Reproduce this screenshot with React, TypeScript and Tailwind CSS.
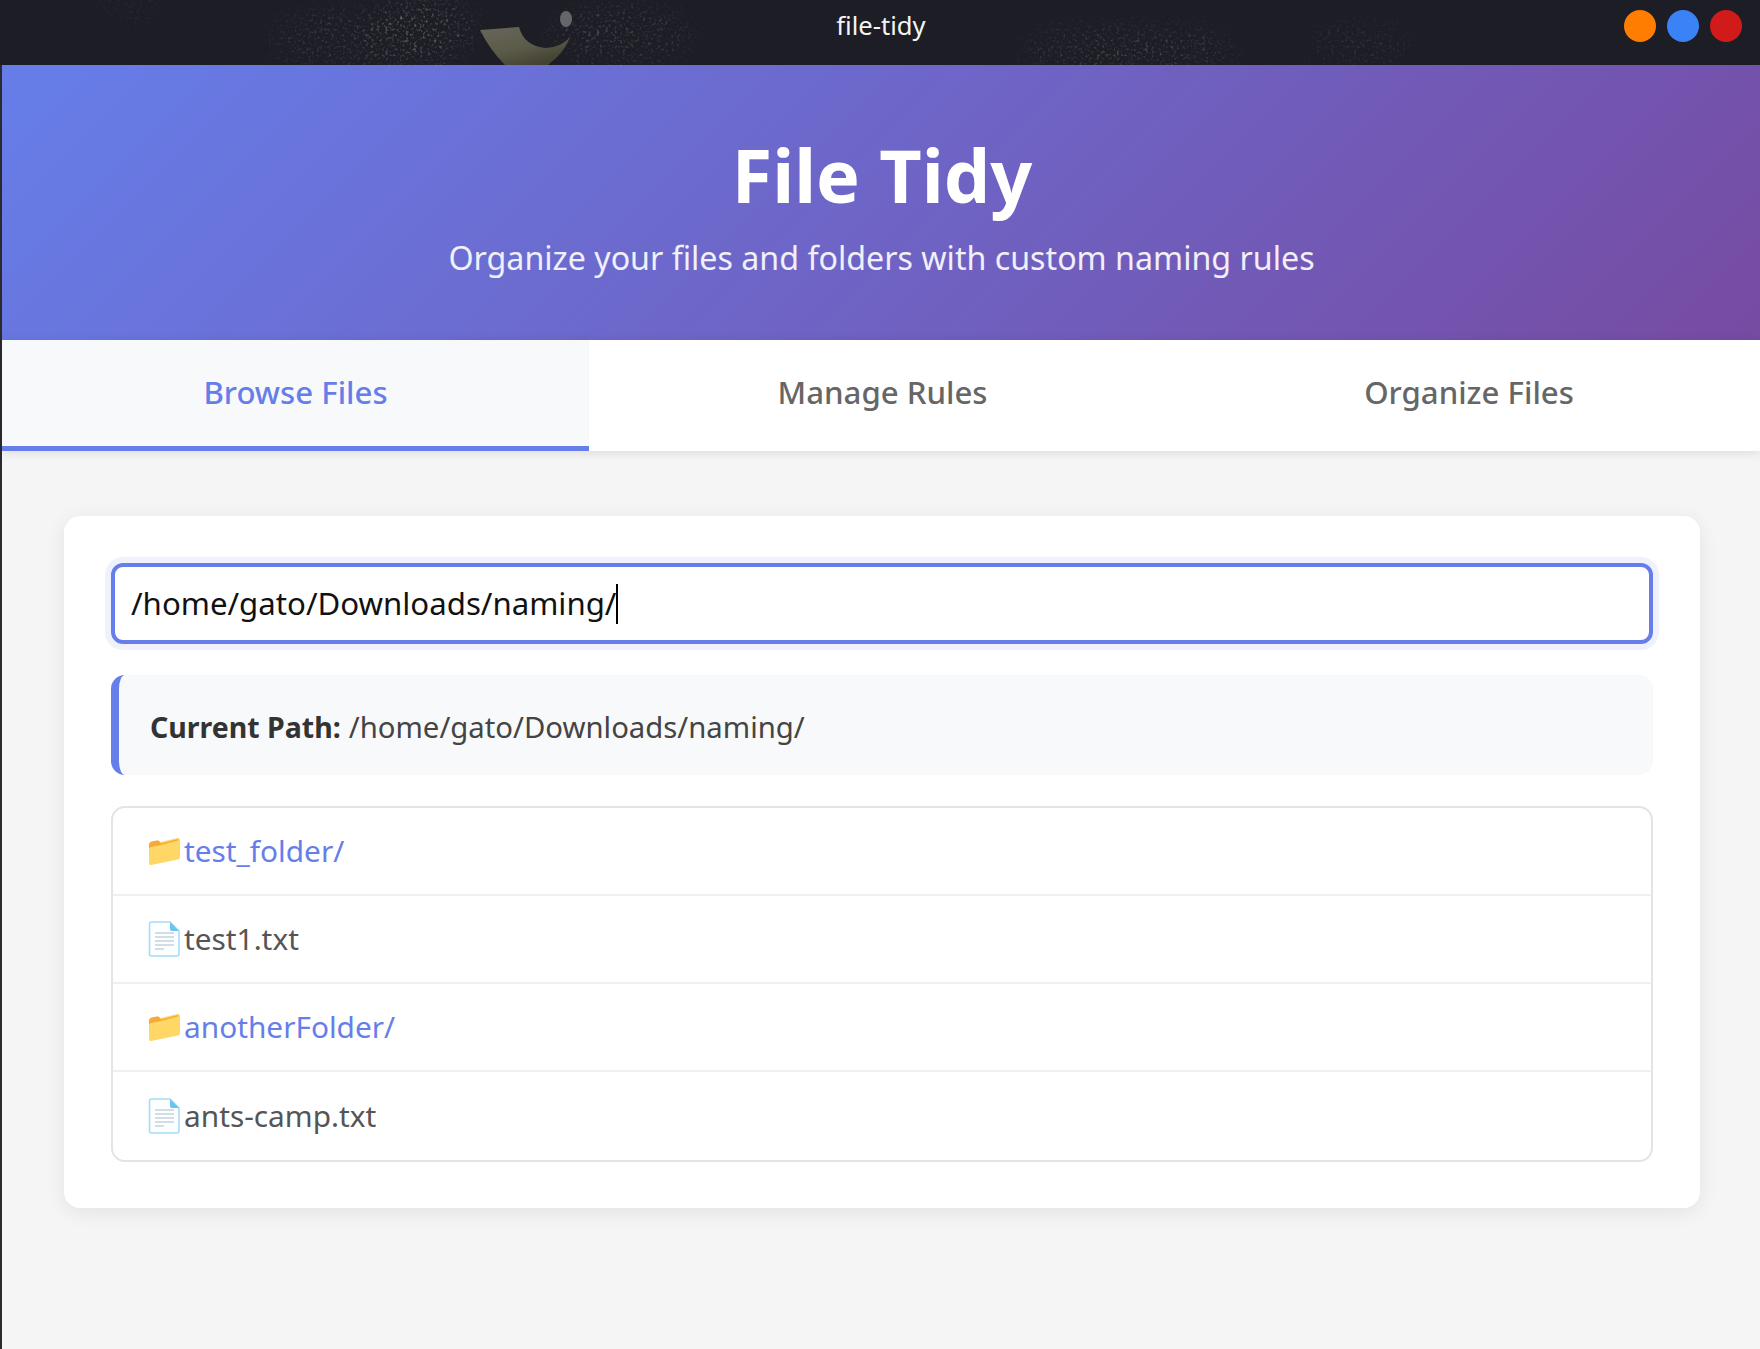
import React from "react";

const FolderIcon = () => (
  <svg width="32" height="30" viewBox="0 0 32 30" className="shrink-0">
    <path d="M1 10 Q1 6 4 5.500 L10 4.500 Q11 4.500 12 6 L30 2 Q32 2 32 4 L32 21 Q32 23 30 23.500 L3 29 Q1 29.500 1 27 Z" fill="#ffd766" />
    <path d="M1 14 L1 9 Q1 6 4 5.500 L9 4.500 Q11 4.200 12 6 L13 7.500 L30 3 L30 4.500 L13 9 Q6 10.500 3 11 Q1 11.500 1 14 Z" fill="#f6a93b" />
  </svg>
);

const FileIcon = () => (
  <svg width="32" height="36" viewBox="0 0 32 36" className="shrink-0">
    <path d="M3.500 1 L22 1 L31 10 L31 33 Q31 35 29 35 L3.500 35 Q1.500 35 1.500 33 L1.500 3 Q1.500 1 3.500 1 Z" fill="#fdfeff" stroke="#a6dcf7" strokeWidth="1.6" />
    <path d="M22 1 L31 10 L24 10 Q22 10 22 8 Z" fill="#6cc3f0" />
    <path d="M7 12 H26 M7 16 H26 M7 20 H26 M7 24 H26 M7 28 H16" stroke="#c5d3dc" strokeWidth="1.4" />
  </svg>
);

const TitleArt = () => (
  <svg className="absolute inset-0 w-full h-full" viewBox="0 0 1760 65" preserveAspectRatio="none">
    <defs>
      <linearGradient id="moon" x1="0" y1="0" x2="0.6" y2="1">
        <stop offset="0" stopColor="#67665c" />
        <stop offset="0.6" stopColor="#5c5a48" />
        <stop offset="1" stopColor="#444233" />
      </linearGradient>
    </defs>
    <filter id="speck" x="0" y="0" width="100%" height="100%">
      <feTurbulence type="fractalNoise" baseFrequency="0.35" numOctaves="2" seed="7" />
      <feColorMatrix values="0 0 0 0 0.4 0 0 0 0 0.4 0 0 0 0 0.4 1.8 1.8 0 0 -1.85" />
    </filter>
    <filter id="blurred"><feGaussianBlur stdDeviation="14" /></filter>
    <mask id="patch">
      <g filter="url(#blurred)" fill="#fff">
        <ellipse cx="340" cy="40" rx="70" ry="28" fillOpacity="0.35" />
        <ellipse cx="420" cy="30" rx="50" ry="34" fillOpacity="0.6" />
        <ellipse cx="620" cy="35" rx="70" ry="28" fillOpacity="0.4" />
        <ellipse cx="1130" cy="50" rx="110" ry="20" fillOpacity="0.45" />
        <ellipse cx="1360" cy="45" rx="50" ry="18" fillOpacity="0.3" />
        <ellipse cx="130" cy="6" rx="30" ry="10" fillOpacity="0.3" />
      </g>
    </mask>
    <rect width="1760" height="65" filter="url(#speck)" mask="url(#patch)" />
    <path d="M480 30 L519 27 Q524 46 546 48 Q562 47 570 37 Q565 52 548 65 L505 65 Q490 50 480 30 Z" fill="url(#moon)" />
    <ellipse cx="566" cy="19" rx="6" ry="8" fill="#66666a" />
  </svg>
);

export default function App() {
  return (
    <div className="min-h-[1349px] bg-[#f5f5f5] text-[#333] font-['Noto_Sans',sans-serif] flex flex-col">
      <div className="relative h-[65px] bg-[#1c1d25] overflow-hidden flex items-center justify-center shrink-0">
        <TitleArt />
        <span className="relative text-[25.6px] text-[#f4f4f5] -mt-[12px] ml-[2px]">file-tidy</span>
        <div className="absolute right-[18px] top-[10px] flex gap-[11px]">
          <span className="w-8 h-8 rounded-full bg-[#ff7d00]" />
          <span className="w-8 h-8 rounded-full bg-[#3b82f6]" />
          <span className="w-8 h-8 rounded-full bg-[#d11a1a]" />
        </div>
      </div>

      <div className="flex-1 flex flex-col border-l-2 border-[#2a2a30]">
        <header className="h-[275px] bg-[linear-gradient(135deg,#667eea_0%,#764ba2_100%)] text-white flex flex-col items-center">
          <h1 className="mt-[56px] ml-[2px] text-[73.6px] leading-[108px] font-bold">File Tidy</h1>
          <p className="mt-[5px] ml-[1px] text-[32.2px] leading-[48px] text-white/90">Organize your files and folders with custom naming rules</p>
        </header>

        <nav className="h-[111px] bg-white grid grid-cols-[587px_587px_584px] shadow-[0_2px_10px_rgba(0,0,0,0.1)] relative">
          <button className="bg-[#f8f9fa] border-b-[5px] border-[#667eea] text-[#667eea] text-[31.2px] font-medium pb-[2px]">Browse Files</button>
          <button className="border-b-[5px] border-transparent text-[#666] text-[31.2px] font-medium pb-[2px]">Manage Rules</button>
          <button className="border-b-[5px] border-transparent text-[#666] text-[31.2px] font-medium pb-[2px] pl-[2px]">Organize Files</button>
        </nav>

        <main className="pt-[65px] pl-[62px] pr-[60px]">
          <section className="h-[692px] bg-white rounded-[16px] shadow-[0_4px_20px_rgba(0,0,0,0.08)] px-[47px] pt-[47px]">
            <div className="h-[81px] bg-white rounded-[12px] border-[4px] border-[#667eea] shadow-[0_0_0_6px_rgba(102,126,234,0.1)] flex items-center pl-[16px] text-[31.2px] text-[#111]">
              <span>/home/gato/Downloads/naming/</span>
              <span className="w-[2px] h-[40px] bg-black" />
            </div>
            <div className="mt-[31px] h-[100px] bg-[#f8f9fa] rounded-[14px] border-l-[8px] border-[#667eea] flex items-center pl-[31px] pt-[5px] text-[#444]">
              <strong className="font-bold text-[28.5px] text-[#333]">Current Path:</strong>
              <span className="ml-[8px] text-[29.3px]">/home/gato/Downloads/naming/</span>
            </div>
            <div className="mt-[31px] rounded-[14px] border-2 border-[#e1e5e9] overflow-hidden">
              {[
                { n: "test_folder/", d: true },
                { n: "test1.txt", d: false },
                { n: "anotherFolder/", d: true },
                { n: "ants-camp.txt", d: false },
              ].map((r, i) => (
                <div key={r.n} className={`h-[88px] flex items-center pl-[35px] text-[29.8px] ${i < 3 ? "border-b-2 border-[#f0f0f0]" : ""} ${r.d ? "text-[#667eea]" : "text-[#555]"}`}>
                  <span className="w-[36px] flex justify-start">{r.d ? <FolderIcon /> : <FileIcon />}</span>
                  <span>{r.n}</span>
                </div>
              ))}
            </div>
          </section>
        </main>
      </div>
    </div>
  );
}
